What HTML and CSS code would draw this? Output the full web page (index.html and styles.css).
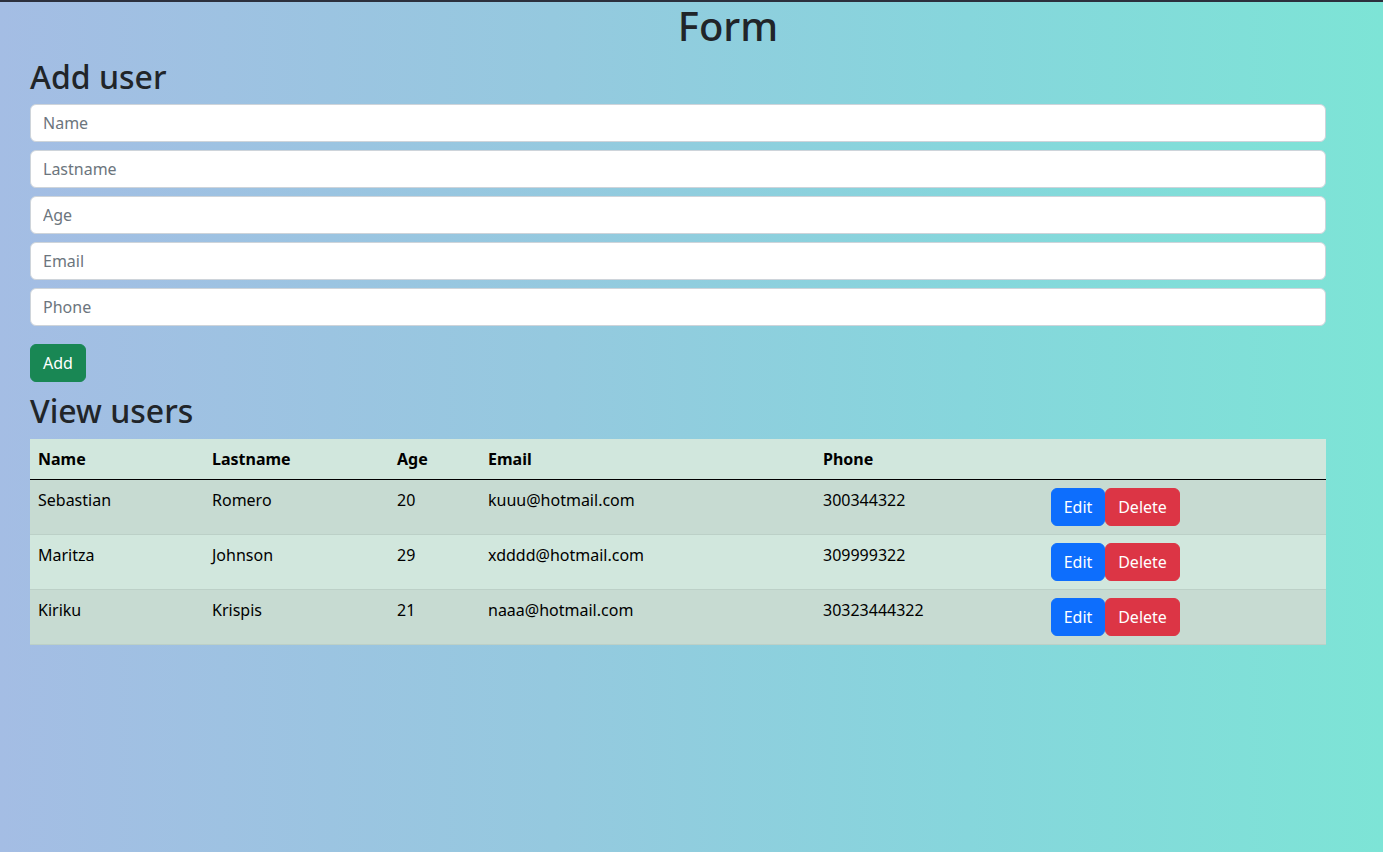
FILE: index.html
```html
<!DOCTYPE html>
<html lang="en">
<head>
<meta charset="utf-8">
<title>Form</title>
<link rel="stylesheet" href="styles.css">
</head>
<body>
<div class="topbar"></div>
<main class="container">
  <h1 class="title">Form</h1>
  <h2 class="heading">Add user</h2>
  <form class="user-form">
    <input class="field" type="text" placeholder="Name">
    <input class="field" type="text" placeholder="Lastname">
    <input class="field" type="text" placeholder="Age">
    <input class="field" type="text" placeholder="Email">
    <input class="field" type="text" placeholder="Phone">
    <button type="button" class="btn btn-add">Add</button>
  </form>
  <h2 class="heading">View users</h2>
  <table class="users">
    <colgroup>
      <col class="c-name"><col class="c-last"><col class="c-age"><col class="c-email"><col class="c-phone"><col class="c-act">
    </colgroup>
    <thead>
      <tr><th>Name</th><th>Lastname</th><th>Age</th><th>Email</th><th>Phone</th><th></th></tr>
    </thead>
    <tbody>
      <tr><td>Sebastian</td><td>Romero</td><td>20</td><td>kuuu@hotmail.com</td><td>300344322</td><td><div class="actions"><button class="btn btn-edit">Edit</button><button class="btn btn-del">Delete</button></div></td></tr>
      <tr><td>Maritza</td><td>Johnson</td><td>29</td><td>xdddd@hotmail.com</td><td>309999322</td><td><div class="actions"><button class="btn btn-edit">Edit</button><button class="btn btn-del">Delete</button></div></td></tr>
      <tr><td>Kiriku</td><td>Krispis</td><td>21</td><td>naaa@hotmail.com</td><td>30323444322</td><td><div class="actions"><button class="btn btn-edit">Edit</button><button class="btn btn-del">Delete</button></div></td></tr>
    </tbody>
  </table>
</main>
</body>
</html>
```

FILE: styles.css
```css
* { box-sizing: border-box; }
html, body { margin: 0; padding: 0; }
body {
  font-family: "Noto Sans", "DejaVu Sans", sans-serif;
  font-size: 16px;
  line-height: 1.5;
  color: #212529;
  min-height: 852px;
  background: linear-gradient(90deg, #a4bde4 0%, #95c9df 40%, #86d6dc 70%, #7de4d6 100%);
}
.topbar {
  height: 2px;
  background: #2c303d;
}
.container {
  margin-left: 30px;
  width: 1296px;
}
.title {
  margin: 0 0 8px 0;
  padding-left: 100px;
  text-align: center;
  font-size: 40px;
  font-weight: 500;
  line-height: 1.2;
}
.heading {
  margin: 0 0 8px 0;
  font-size: 32px;
  font-weight: 500;
  line-height: 1.2;
}
.user-form {
  display: flex;
  flex-direction: column;
  align-items: flex-start;
  gap: 8px;
  margin-bottom: 10px;
}
.field {
  display: block;
  width: 100%;
  height: 38px;
  padding: 6px 12px;
  font-family: inherit;
  font-size: 16px;
  line-height: 1.5;
  color: #212529;
  background: #fff;
  border: 1px solid #ced4da;
  border-radius: 6px;
  outline: none;
}
.field::placeholder { color: #6c757d; }
.btn {
  font-family: inherit;
  font-size: 16px;
  line-height: 1.5;
  padding: 6px 0;
  border: 1px solid transparent;
  border-radius: 6px;
  color: #fff;
  cursor: pointer;
  height: 38px;
  text-align: center;
}
.btn-add {
  width: 56px;
  margin-top: 10px;
  background: #198754;
  border-color: #198754;
}
.btn-edit { width: 54px; background: #0d6efd; border-color: #0d6efd; }
.btn-del { width: 75px; background: #dc3545; border-color: #dc3545; }
.users {
  width: 100%;
  border-collapse: collapse;
  table-layout: fixed;
  color: #000;
  background: #d1e7dd;
}
.c-name { width: 174px; }
.c-last { width: 185px; }
.c-age { width: 91px; }
.c-email { width: 335px; }
.c-phone { width: 228px; }
.users th, .users td {
  padding: 8px;
  text-align: left;
  vertical-align: top;
  border-bottom: 1px solid #bcd0c7;
}
.users th { font-weight: 700; }
.users thead th { border-bottom-color: #000; }
.users tbody tr:nth-child(odd) td { background: #c7dbd2; }
.actions { display: flex; }
```
